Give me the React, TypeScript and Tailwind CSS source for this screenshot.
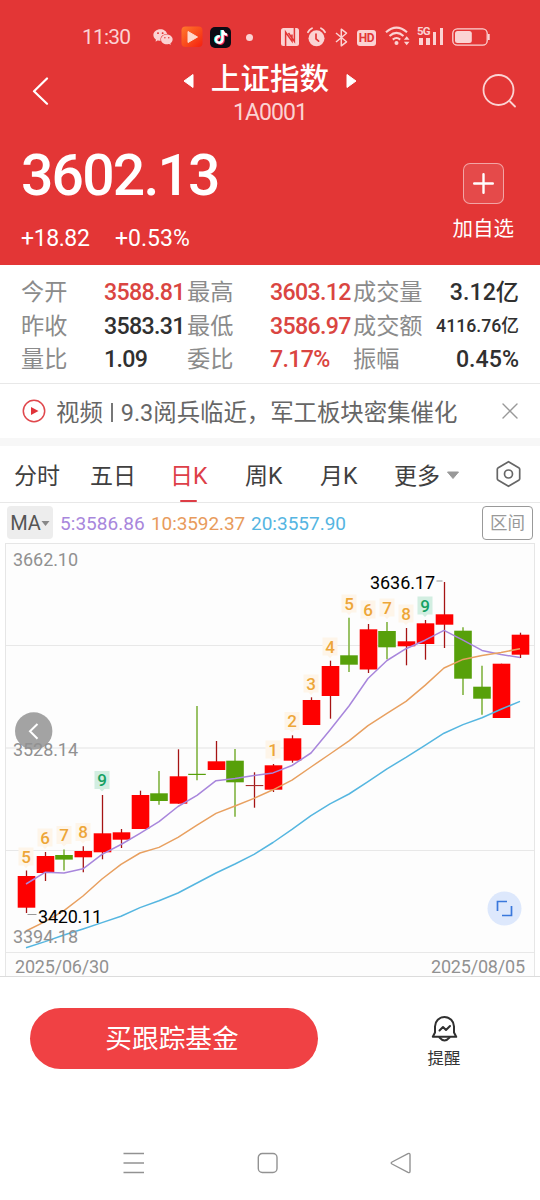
import React, { FunctionComponent } from 'react'
import { AiFillWechat } from 'react-icons/ai'
import { FaTiktok } from 'react-icons/fa'

type Candle = {
  x: number
  open: number
  close: number
  high: number
  low: number
  up: boolean
}

type Marker = { x: number, y: number, n: string }

// all y values are in page pixels, the svg viewBox starts at 542
const candles: Candle[] = [
  { x: 26.5, open: 876, close: 907.7, high: 870.5, low: 913, up: true },
  { x: 45.5, open: 856, close: 873, high: 852, low: 881, up: true },
  { x: 64, open: 855, close: 859.6, high: 849.5, low: 870.5, up: false },
  { x: 83.3, open: 851, close: 857.3, high: 846.3, low: 872.3, up: true },
  { x: 102.5, open: 833.3, close: 852.3, high: 795, low: 859.3, up: true },
  { x: 121.5, open: 832.3, close: 839.7, high: 829, low: 848, up: true },
  { x: 140.5, open: 795, close: 829, high: 790.7, low: 829, up: true },
  { x: 159, open: 793.3, close: 801, high: 771, low: 804.7, up: false },
  { x: 178.5, open: 776.3, close: 803.7, high: 749.3, low: 803.7, up: true },
  { x: 197, open: 773.8, close: 775, high: 706, low: 780.3, up: false },
  { x: 216.5, open: 761.3, close: 770, high: 741, low: 770, up: true },
  { x: 235, open: 760.7, close: 782.3, high: 749, low: 816.7, up: false },
  { x: 254.5, open: 785, close: 786.1, high: 772.3, low: 807.7, up: true },
  { x: 273.5, open: 765.3, close: 789.7, high: 764, low: 792, up: true },
  { x: 292.5, open: 738.3, close: 760.7, high: 735.3, low: 762.7, up: true },
  { x: 311.5, open: 700, close: 725, high: 697.3, low: 725, up: true },
  { x: 330.5, open: 666, close: 696, high: 660.7, low: 718.7, up: true },
  { x: 349, open: 655.3, close: 664.7, high: 617.7, low: 672, up: false },
  { x: 368.5, open: 629.3, close: 669.5, high: 624, low: 673, up: true },
  { x: 387, open: 631, close: 647.3, high: 622, low: 659.3, up: false },
  { x: 406.5, open: 641.3, close: 646.3, high: 628, low: 665.3, up: true },
  { x: 425.5, open: 623.3, close: 644, high: 620, low: 659.7, up: true },
  { x: 444.5, open: 614.3, close: 624.7, high: 582, low: 648, up: true },
  { x: 463, open: 630.7, close: 678.7, high: 627.3, low: 695, up: false },
  { x: 482, open: 686.7, close: 698.7, high: 665.7, low: 714.7, up: false },
  { x: 501.5, open: 663.7, close: 718, high: 663.7, low: 718, up: true },
  { x: 520.5, open: 634.7, close: 654.7, high: 632.7, low: 658, up: true },
]

const ma5 = [884, 872.3, 873, 868.8, 854.3, 844.5, 833.3, 821.7, 806.5, 795.3, 780.7, 778.5, 775.5, 772.9, 765.5, 753, 730, 706, 678.5, 660.5, 648.7, 640.2, 630.4, 640.2, 650.4, 654.5, 657.5]
const ma10 = [931, 921.7, 910.7, 896, 879, 864.4, 853, 847.4, 837.4, 825.2, 813.4, 806, 798.4, 789.8, 780.2, 767, 754, 740.8, 725.6, 713.4, 701.4, 685.4, 668, 659.4, 655.5, 652.5, 648.8]
const ma20 = [947.7, 941.6, 935, 929, 922.6, 916.3, 907.6, 900.8, 893, 883, 873, 864, 854.4, 842.5, 829.4, 815.6, 803.8, 794, 781.6, 768.8, 757.4, 745.4, 733.2, 724.6, 717.7, 709.2, 701.4]

const markers: Marker[] = [
  { x: 26, y: 857, n: '5' },
  { x: 45, y: 838, n: '6' },
  { x: 64, y: 835.5, n: '7' },
  { x: 83, y: 832.5, n: '8' },
  { x: 102, y: 780.5, n: '9' },
  { x: 273, y: 750, n: '1' },
  { x: 292, y: 721.5, n: '2' },
  { x: 311, y: 684, n: '3' },
  { x: 330, y: 647, n: '4' },
  { x: 349, y: 604, n: '5' },
  { x: 368, y: 610, n: '6' },
  { x: 387, y: 608, n: '7' },
  { x: 406, y: 614, n: '8' },
  { x: 425, y: 606, n: '9' },
]

const toPoints = (values: number[]) => values.map((v, i) => `${26 + i * 19},${v}`).join(' ')


const StatusBar: FunctionComponent = () => {
  return (
    <div className="flex h-[58px] items-center pt-4 pl-[82px] text-[#fbd3d3]">
      <span className="w-[70px] text-[21px] leading-6 tracking-[-0.8px]">11:30</span>
      <AiFillWechat className="h-[22px] w-[22px]" />
      <svg className="ml-[7px] h-[22px] w-[22px]" viewBox="0 0 22 22">
        <defs>
          <linearGradient id="play" x1="0" y1="0" x2="1" y2="1">
            <stop offset="0" stopColor="#ff7a2c" />
            <stop offset="1" stopColor="#f5200f" />
          </linearGradient>
        </defs>
        <rect x="0.5" y="0.5" width="21" height="20.5" rx="4" fill="url(#play)" />
        <path d="M7 5.5v11l9.5-5.5z" fill="#ffd9cd" stroke="#ffd9cd" strokeWidth="1" strokeLinejoin="round" />
      </svg>
      <span className="relative ml-[7px] h-[21px] w-[21px] rounded-[5px] bg-[#0d0b14]">
        <FaTiktok className="absolute top-[3px] left-[3px] h-[14px] w-[14px] text-[#25f4ee]" />
        <FaTiktok className="absolute top-1 left-[5px] h-[14px] w-[14px] text-[#fe2c55]" />
        <FaTiktok className="absolute top-[3.5px] left-1 h-[14px] w-[14px] text-white" />
      </span>
      <span className="ml-[15px] h-[7px] w-[7px] rounded-full bg-[#fbd3d3]" />

      {/* nfc */}
      <svg className="ml-[28px] h-[18px] w-[18px]" viewBox="0 0 18 18">
        <rect x="0" y="0" width="18" height="18" rx="2.5" fill="currentColor" />
        <path d="M4.6 18V4.2l6.4 9V6.5M13.4 0v13.4L7.5 5" fill="none" stroke="#e33636" strokeWidth="1.5" />
      </svg>
      {/* alarm */}
      <svg className="ml-2 h-5 w-[19px]" viewBox="0 0 19 20">
        <circle cx="9.5" cy="11.3" r="8" fill="currentColor" />
        <path d="M1 5.2Q2.3 2.5 5 1.2M18 5.2Q16.7 2.5 14 1.2" fill="none" stroke="currentColor" strokeWidth="1.8" strokeLinecap="round" />
        <path d="M9 7v4.8l2.6 2.3" fill="none" stroke="#e33636" strokeWidth="1.7" strokeLinecap="round" />
      </svg>
      {/* bluetooth */}
      <svg className="ml-[9px] h-[19px] w-[13px]" viewBox="0 0 13 19">
        <path d="M1 5l10.5 8.8-5.2 4V1.2l5.2 4L1 14" fill="none" stroke="currentColor" strokeWidth="1.5" strokeLinejoin="round" />
      </svg>
      <span className="mt-[1px] ml-[9px] h-4 w-[19px] rounded-[3px] bg-[#fbd3d3] text-center text-[12px] leading-4 font-bold tracking-[-0.5px] text-[#e33636]">HD</span>
      {/* wifi */}
      <svg className="mt-[-2px] ml-[9px] h-5 w-[25px]" viewBox="0 0 25 20">
        <path d="M1 6.3Q11.5 -3 22 6.3M4.5 10Q11.5 3.8 18.5 10M7.8 13.6Q11.5 10.4 15.2 13.6" fill="none" stroke="currentColor" strokeWidth="2.1" />
        <circle cx="11.5" cy="17" r="2" fill="currentColor" />
        <path d="M21.7 10.3l2.8 3.4h-5.6zM21.7 19.2l2.8-3.4h-5.6z" fill="currentColor" />
      </svg>
      {/* signal */}
      <span className="relative ml-[7px] flex h-5 w-[26px] items-end pb-[2px] pl-[2px]">
        <span className="h-[7px] w-[3.5px] bg-[#fbd3d3]" />
        <span className="ml-[3.5px] h-[7px] w-[3.5px] bg-[#fbd3d3]" />
        <span className="ml-[3px] h-[13px] w-[3.5px] bg-[#fbd3d3]" />
        <span className="ml-[3.5px] h-[17px] w-[3.5px] bg-[#fbd3d3]" />
        <span className="absolute -top-[2px] left-0 text-[11.5px] leading-3 font-bold tracking-[-0.8px]">5G</span>
      </span>
      {/* battery */}
      <svg className="ml-[9px] h-[18px] w-[39px]" viewBox="0 0 39 18">
        <rect x="0.8" y="0.8" width="34.4" height="16.4" rx="4.5" fill="none" stroke="currentColor" strokeWidth="1.3" />
        <rect x="3" y="3" width="16.8" height="12" rx="2.5" fill="currentColor" />
        <path d="M36.8 6v6" stroke="currentColor" strokeWidth="1.8" />
      </svg>
    </div>
  )
}


const Header: FunctionComponent = () => {
  return (
    <div className="h-[265px] bg-[#e33636] text-white">
      <StatusBar />

      <div className="flex h-[66px] items-center pr-[24px] pl-8">
        <svg className="h-7 w-[35px]" viewBox="0 0 35 28" fill="none" stroke="currentColor" strokeWidth="2.2" strokeLinecap="round" strokeLinejoin="round">
          <path d="M15 1.5L2 14.3l13 12.4" />
        </svg>
        <div className="ml-[115px] w-[176px] text-center">
          <div className="flex h-10 items-center justify-center">
            <svg className="mt-[5px] h-4 w-[11px]" viewBox="0 0 11 16">
              <path d="M10 1.5v13L1 8z" fill="currentColor" stroke="currentColor" strokeLinejoin="round" />
            </svg>
            <span className="mx-[17px] pt-px text-[29.6px] leading-10 font-medium">上证指数</span>
            <svg className="mt-[5px] h-4 w-[11px]" viewBox="0 0 11 16">
              <path d="M1 1.5v13L10 8z" fill="currentColor" stroke="currentColor" strokeLinejoin="round" />
            </svg>
          </div>
          <div className="h-[26px] pt-px text-[23px] leading-[28px] tracking-[-0.9px] text-[#fbd3d3]">1A0001</div>
        </div>
        <svg className="ml-auto h-[35px] w-[35px]" viewBox="0 0 35 35" fill="none" stroke="#fbd3d3" strokeWidth="1.8" strokeLinecap="round">
          <circle cx="17.5" cy="16" r="15" />
          <path d="M29 27.5l5 5" />
        </svg>
      </div>

      <div className="flex justify-between pr-[26px] pl-[21px]">
        <div>
          <div className="mt-[22px] text-[57px] leading-[60px] font-medium tracking-[-1.8px]">3602.13</div>
          <div className="mt-[18px] flex text-[23px] leading-[30px]">
            <span className="w-[94px] tracking-[-0.4px]">+18.82</span>
            <span>+0.53%</span>
          </div>
        </div>
        <div className="flex flex-col items-center">
          <button className="mt-[39px] flex h-[41px] w-[41px] items-center justify-center rounded-[7px] border border-white/50 bg-white/10">
            <svg className="h-[21px] w-[21px]" viewBox="0 0 21 21" stroke="currentColor" strokeWidth="2.4" strokeLinecap="round">
              <path d="M10.5 1.2v18.6M1.2 10.5h18.6" />
            </svg>
          </button>
          <span className="mt-[10px] text-[20.5px] leading-[30px]">加自选</span>
        </div>
      </div>
    </div>
  )
}


const Stats: FunctionComponent = () => {
  const red = "text-[#da4541]"
  const dark = "text-[#303030]"

  const rows = [
    ['今开', '3588.81', red, '最高', '3603.12', red, '成交量', '3.12亿'],
    ['昨收', '3583.31', dark, '最低', '3586.97', red, '成交额', '4116.76亿'],
    ['量比', '1.09', dark, '委比', '7.17%', red, '振幅', '0.45%'],
  ]

  return (
    <div className="h-[119px] border-b border-[#e8e8e8] bg-white pt-[11px] pr-[21px] pl-[21px]">
      {rows.map((row) => (
        <div key={row[0]} className="flex h-[33.4px] items-center text-[23.2px] leading-[33px] text-[#8b8b8b]">
          <span className="w-[83px]">{row[0]}</span>
          <span className={`w-[83px] font-medium tracking-[-0.7px] whitespace-nowrap ${row[2]}`}>{row[1]}</span>
          <span className="w-[83px]">{row[3]}</span>
          <span className={`w-[83px] font-medium tracking-[-0.7px] whitespace-nowrap ${row[5]}`}>{row[4]}</span>
          <span className="whitespace-nowrap">{row[6]}</span>
          <span className={`ml-auto font-medium whitespace-nowrap ${dark} ${row[7].length > 6 ? "text-[17.7px]" : "text-[23.2px]"}`}>{row[7]}</span>
        </div>
      ))}
    </div>
  )
}


const NewsBar: FunctionComponent = () => {
  return (
    <div className="flex h-[54px] items-center bg-white pr-[22px] pl-[22px]">
      <svg className="h-6 w-6 shrink-0" viewBox="0 0 24 24">
        <circle cx="12" cy="12" r="10.7" fill="none" stroke="#e0474c" strokeWidth="1.5" />
        <path d="M9 8v8l7.5-4z" fill="#e0343a" />
      </svg>
      <span className="ml-[10px] pt-[3px] text-[23.4px] leading-8 whitespace-nowrap text-[#666]">
        视频<span className="mx-[8px] inline-block h-[19px] w-[2px] translate-y-px bg-[#777]" /><span>9.3</span>阅兵临近，军工板块密集催化
      </span>
      <svg className="ml-auto h-4 w-4 shrink-0" viewBox="0 0 16 16" stroke="#999" strokeWidth="1.4" strokeLinecap="round">
        <path d="M1 1l14 14M15 1L1 15" />
      </svg>
    </div>
  )
}


const Tabs: FunctionComponent = () => {
  return (
    <div className="flex h-[57px] items-center border-b border-[#e8e8e8] bg-white pl-[14px] text-[23px] leading-[34px] text-[#404040]">
      <span className="w-[76px] pt-[6px]">分时</span>
      <span className="w-20 pt-[6px]">五日</span>
      <span className="relative flex h-full w-[75px] items-center pt-[6px] text-[#dd4048]">
        日K
        <span className="absolute bottom-0 left-[10px] h-[2.5px] w-[17px] rounded-full bg-[#dd3d46]" />
      </span>
      <span className="w-[75px] pt-[6px]">周K</span>
      <span className="w-[74px] pt-[6px]">月K</span>
      <span className="pt-[6px]">更多</span>
      <svg className="mt-[3px] ml-[6px] h-[9px] w-[14px]" viewBox="0 0 14 9">
        <path d="M1.5 1h11L7 7.5z" fill="#999" stroke="#999" strokeLinejoin="round" />
      </svg>
      <svg className="mr-[19px] ml-auto h-7 w-[25px]" viewBox="0 0 25 28" fill="none" stroke="#666" strokeWidth="1.7" strokeLinejoin="round">
        <path d="M12.5 1.7l10.2 6q1 0.6 1 1.500v9.600q0 0.900-1 1.500l-10.200 6-10.200-6q-1-0.600-1-1.500V9.200q0-0.900 1-1.500z" />
        <circle cx="12.5" cy="14" r="4" />
      </svg>
    </div>
  )
}


const MaRow: FunctionComponent = () => {
  return (
    <div className="flex h-[39px] items-center bg-white pr-[7px] pl-[7px] text-[19px] leading-[33px]">
      <button className="flex h-[33px] w-[46px] items-center justify-center rounded-[4px] bg-[#ededed] pt-px text-[20px] text-[#555]">
        MA
        <svg className="h-[7px] w-[9px]" viewBox="0 0 9 7">
          <path d="M0.5 1h8L4.500 6z" fill="#888" />
        </svg>
      </button>
      <span className="ml-[7px] w-[91px] pt-px tracking-[0.05px] whitespace-nowrap text-[#a887dc]">5:3586.86</span>
      <span className="w-[100px] pt-px tracking-[-0.1px] whitespace-nowrap text-[#e89b5c]">10:3592.37</span>
      <span className="pt-px tracking-[0px] whitespace-nowrap text-[#55b5e2]">20:3557.90</span>
      <button className="ml-auto h-[34px] w-[51px] rounded-[4px] border border-[#999] text-[17.5px] leading-8 text-[#999]">区间</button>
    </div>
  )
}


const Chart: FunctionComponent = () => {
  return (
    <svg className="block h-[435px] w-[540px]" viewBox="0 542 540 435" fontSize="18">
      {/* grid */}
      <rect x="5.5" y="543.5" width="529" height="433" fill="#fdfdfd" stroke="#e6e6e6" />
      <path d="M6 645.5h528M6 850.5h528M6 952.5h528" stroke="#e8e8e8" />
      <path d="M6 748h528" stroke="#f0f0f0" strokeWidth="2" />
      <path d="M0 976.5h540" stroke="#dcdcdc" />

      {/* back button */}
      <circle cx="33.7" cy="731" r="18.7" fill="#a3a3a3" />
      <path d="M37.5 724l-7.5 7.3 7.5 7.5" fill="none" stroke="#fff" strokeWidth="2" />

      {/* candles */}
      {candles.map((c) => {
        const thin = c.close - c.open < 2
        return (
          <g key={c.x}>
            <path d={`M${c.x} ${c.high}V${c.low}`} stroke={c.up ? "#a51414" : "#8fbc56"} strokeWidth={c.up ? 1.3 : 1.8} />
            <rect x={c.x - 8.8} y={c.open} width="17.6" height={c.close - c.open} fill={c.up ? (thin ? "#a83030" : "#fe0000") : "#57a00a"} />
          </g>
        )
      })}

      <g fill="none" strokeWidth="1.5" strokeLinejoin="round">
        <polyline points={toPoints(ma5)} stroke="#a886dc" />
        <polyline points={toPoints(ma10)} stroke="#e8a060" />
        <polyline points={toPoints(ma20)} stroke="#55b6e0" />
      </g>

      {/* nine-turn markers */}
      {markers.map((m) => (
        <g key={m.x}>
          <path
            d={`M${m.x - 7.5} ${m.y - 9.5}h15v18h-5l-2.5 2.5-2.5-2.5h-5z`}
            fill={m.n === '9' ? "#d2eee1" : "#fef5e9"}
          />
          <text x={m.x} y={m.y + 5.7} textAnchor="middle" fontSize="17" fontWeight="500" fill={m.n === '9' ? "#16a163" : "#eda638"}>{m.n}</text>
        </g>
      ))}

      {/* prices */}
      <g fill="#919191">
        <text x="13" y="566" textLength="65">3662.10</text>
        <text x="13" y="756" textLength="65">3528.14</text>
        <text x="13" y="942.5" textLength="65">3394.18</text>
        <text x="15" y="972.5" textLength="94">2025/06/30</text>
        <text x="431" y="972.5" textLength="94">2025/08/05</text>
      </g>
      <g fill="#000">
        <text x="38" y="922.5" textLength="64">3420.11</text>
        <text x="370" y="589" textLength="65">3636.17</text>
      </g>
      <path d="M27.5 914.5h9M436.5 581h6" stroke="#999" />

      {/* fullscreen */}
      <circle cx="504.5" cy="908.5" r="17" fill="#dde8fc" />
      <path d="M507 901.5h-9.500v9.500M511.500 906v9.500h-9.500" fill="none" stroke="#3a78dc" strokeWidth="1.7" />
    </svg>
  )
}


const BottomBar: FunctionComponent = () => {
  return (
    <div className="flex h-[143px] items-start bg-white pl-[30px]">
      <button className="mt-[30.5px] h-[61px] w-[288px] rounded-full bg-[#f04144] pt-[2px] pr-[4px] text-[26.7px] leading-[59px] text-white">买跟踪基金</button>
      <div className="mt-[38px] ml-[109px] flex w-[34px] flex-col items-center">
        <svg className="h-7 w-[27px]" viewBox="0 0 27 28" fill="none" stroke="#303030" strokeWidth="2" strokeLinecap="round" strokeLinejoin="round">
          <path d="M4 17.5V11.5a9.500 9.500 0 0 1 19 0v6l2.200 4.300H1.800z" />
          <path d="M8.500 22.500q5 5.800 10 0" />
          <path d="M8.500 15.500l3.500-3.500 3 3 4-4" />
        </svg>
        <span className="mt-[5px] text-[16.4px] leading-[22px] whitespace-nowrap text-[#333]">提醒</span>
      </div>
    </div>
  )
}


const SystemNav: FunctionComponent = () => {
  return (
    <div className="flex h-20 items-center bg-white pt-[6px] pl-[123px]">
      <svg className="h-[22px] w-[22px]" viewBox="0 0 22 22" stroke="#929292" strokeWidth="1.5">
        <path d="M0.5 1.5h20.500M0.500 11h20.500M0.500 20.500h20.500" />
      </svg>
      <svg className="ml-28 h-[22px] w-[22px]" viewBox="0 0 22 22" fill="none" stroke="#929292" strokeWidth="1.4">
        <rect x="1.3" y="1.5" width="18.7" height="19" rx="4" />
      </svg>
      <svg className="ml-[111px] h-[22px] w-[22px]" viewBox="0 0 22 22" fill="none" stroke="#929292" strokeWidth="1.4" strokeLinejoin="round">
        <path d="M18 1.600q2-0.800 2 1.200v16.400q0 2-2 1.200L2 12q-1.600-1 0-2z" />
      </svg>
    </div>
  )
}


const App: FunctionComponent = () => {
  return (
    <div className="h-[1200px] w-[540px] overflow-hidden bg-white font-[Roboto,'Noto_Sans_CJK_SC',sans-serif]">
      <Header />
      <Stats />
      <NewsBar />
      <div className="h-2 bg-[#f7f7f7]" />
      <Tabs />
      <MaRow />
      <Chart />
      <BottomBar />
      <SystemNav />
    </div>
  )
}


export default App
